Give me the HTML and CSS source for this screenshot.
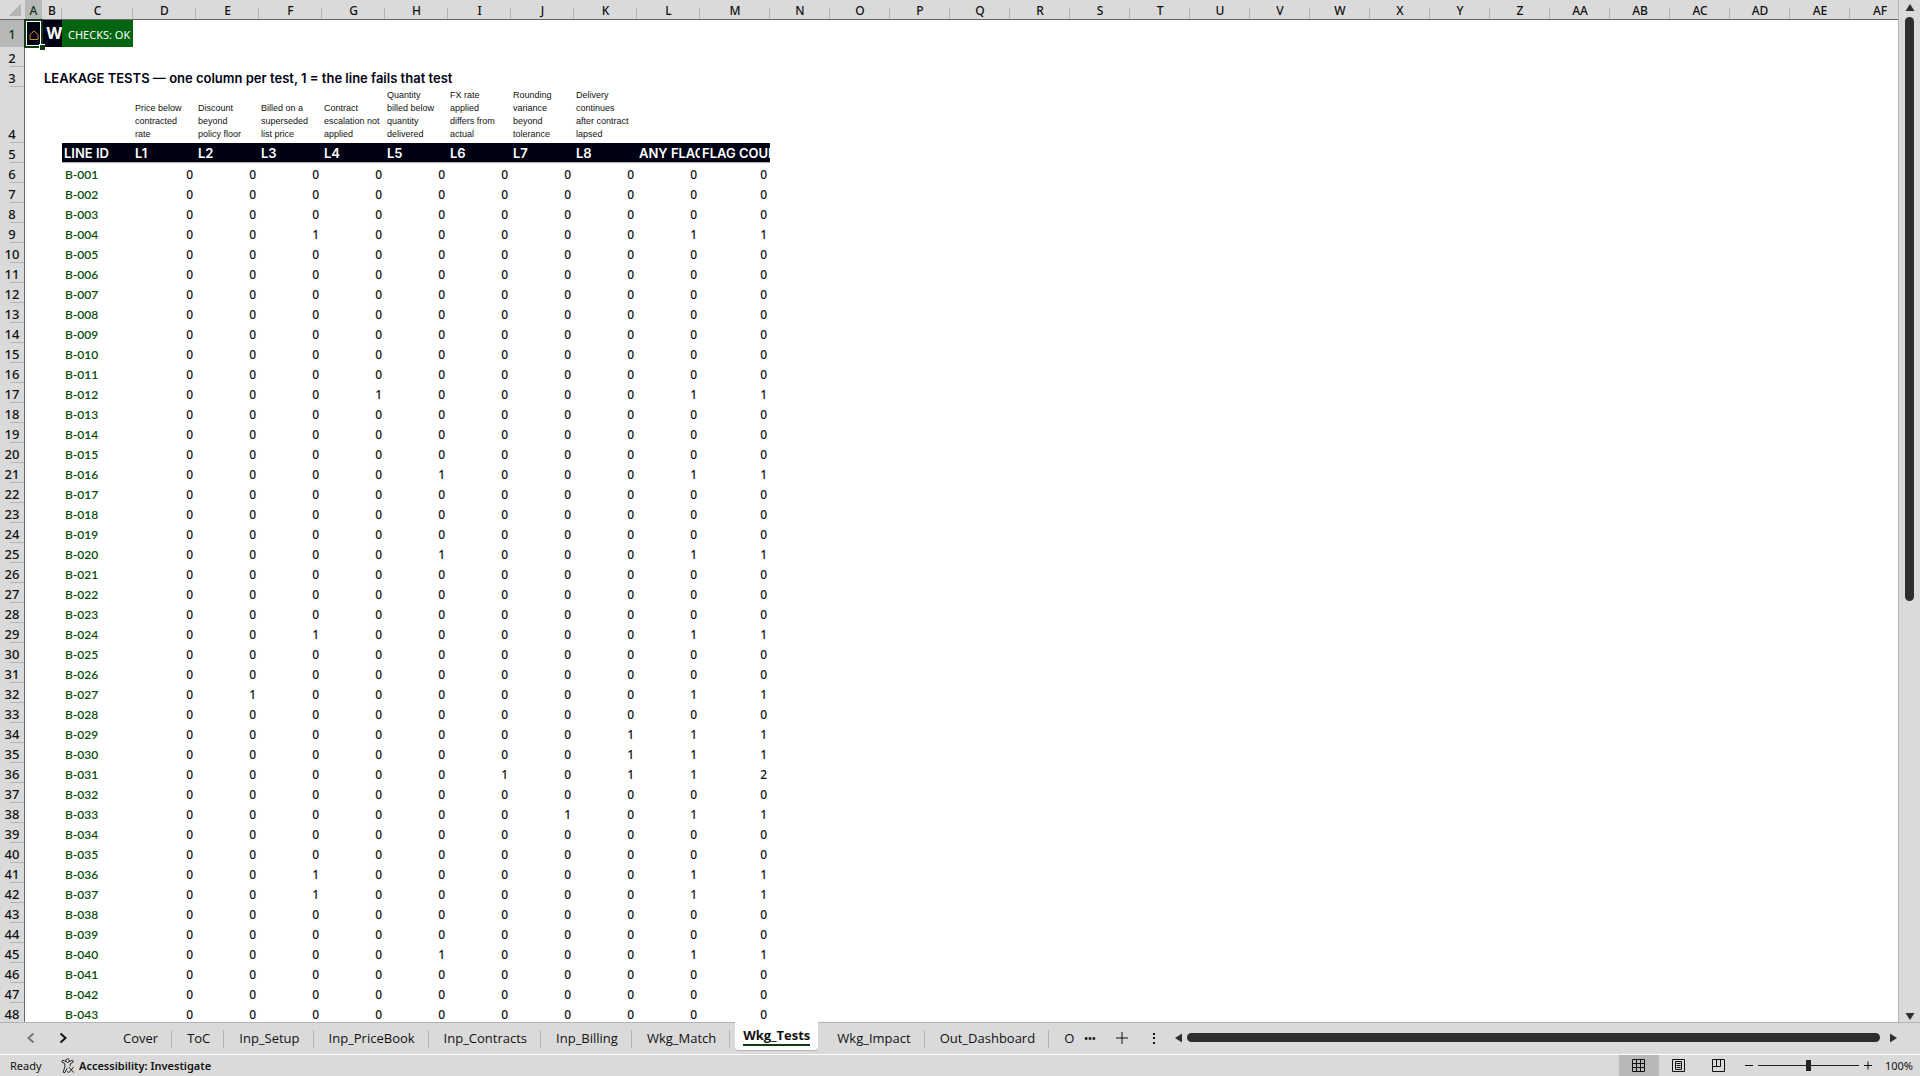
FILE: index.html
```html
<!DOCTYPE html>
<html lang="en">
<head>
	<meta charset="utf-8">
	<title>Wkg_Tests</title>
	<link rel="stylesheet" href="styles.css">
</head>
<body>
	<div class="app">
		<main class="workspace">
			<div class="sheet">
				<table class="grid">
					<colgroup>
						<col class="col-head"><col class="col-a"><col class="col-b"><col class="col-c">
						<col class="col-test" span="9"><col class="col-m"><col class="col-std" span="19">
					</colgroup>
					<thead>
						<tr id="letters"></tr>
					</thead>
					<tbody id="rows">
						<tr class="row-title">
							<th class="active" scope="row">1</th>
							<td class="home selected">
								<svg class="home-icon" viewBox="0 0 10 10"><path d="M1 9.500V4.500L5 1l4 3.500v5z"/></svg>
								<span class="handle"></span>
							</td>
							<td class="name">W</td>
							<td class="checks">CHECKS: OK</td>
						</tr>
						<tr><th scope="row">2</th></tr>
						<tr><th scope="row">3</th><td></td><td class="heading">LEAKAGE TESTS — one column per test, 1 = the line fails that test</td></tr>
						<tr class="row-notes">
							<th scope="row">4</th><td></td><td></td><td></td>
							<td>Price below<br>contracted<br>rate</td>
							<td>Discount<br>beyond<br>policy floor</td>
							<td>Billed on a<br>superseded<br>list price</td>
							<td>Contract<br>escalation not<br>applied</td>
							<td>Quantity<br>billed below<br>quantity<br>delivered</td>
							<td>FX rate<br>applied<br>differs from<br>actual</td>
							<td>Rounding<br>variance<br>beyond<br>tolerance</td>
							<td>Delivery<br>continues<br>after contract<br>lapsed</td>
						</tr>
						<tr class="row-fields">
							<th scope="row">5</th><td></td><td></td>
							<td class="field">LINE ID</td><td class="field">L1</td><td class="field">L2</td>
							<td class="field">L3</td><td class="field">L4</td><td class="field">L5</td>
							<td class="field">L6</td><td class="field">L7</td><td class="field">L8</td>
							<td class="field">ANY FLAG</td><td class="field">FLAG COUNT</td>
						</tr>
					</tbody>
				</table>
			</div>
			<div class="vscroll">
				<button class="arrow" aria-label="Scroll up"><svg viewBox="0 0 10 8"><path d="M5 0l4.500 7h-9z"/></svg></button>
				<div class="vtrack"><div class="vthumb"></div></div>
				<button class="arrow" aria-label="Scroll down"><svg viewBox="0 0 10 8"><path d="M5 8L.5 1h9z"/></svg></button>
			</div>
		</main>

		<nav class="tabbar">
			<div class="tabnav">
				<button aria-label="Previous sheet"><svg class="dim" viewBox="0 0 10 12"><path d="M7.500 1.500L2.500 6l5 4.500"/></svg></button>
				<button aria-label="Next sheet"><svg viewBox="0 0 10 12"><path d="M2.500 1.500L7.500 6l-5 4.500"/></svg></button>
			</div>
			<div class="tabs">
				<button class="tab">Cover</button>
				<button class="tab">ToC</button>
				<button class="tab">Inp_Setup</button>
				<button class="tab">Inp_PriceBook</button>
				<button class="tab">Inp_Contracts</button>
				<button class="tab">Inp_Billing</button>
				<button class="tab">Wkg_Match</button>
				<button class="tab current"><span>Wkg_Tests</span></button>
				<button class="tab">Wkg_Impact</button>
				<button class="tab">Out_Dashboard</button>
				<button class="tab last">O</button>
			</div>
			<div class="tabtools">
				<button aria-label="More sheets"><svg class="dots" viewBox="0 0 12 14"><path d="M0 6h3v3H0zM4.500 6h3v3h-3zM9 6h3v3H9z"/></svg></button>
				<button aria-label="New sheet"><svg viewBox="0 0 12 12"><path d="M6 0v12M0 6h12"/></svg></button>
				<button aria-label="Resize tabs"><svg class="dots" viewBox="0 0 12 12"><path d="M5 1h2v2H5zM5 5h2v2H5zM5 10h2v2H5z"/></svg></button>
			</div>
			<div class="hscroll">
				<button class="arrow" aria-label="Scroll left"><svg viewBox="0 0 8 10"><path d="M0 5L7 .5v9z"/></svg></button>
				<div class="hthumb"></div>
				<button class="arrow" aria-label="Scroll right"><svg viewBox="0 0 8 10"><path d="M8 5L1 .5v9z"/></svg></button>
			</div>
		</nav>

		<footer class="status">
			<span class="ready">Ready</span>
			<button class="access">
				<svg viewBox="0 0 16 18"><circle cx="7.500" cy="3" r="2"/><path d="M5.500 4L2 2.500 1 4.500 4.500 6.500v3.500L2.500 16l2 .5L7 11.500M9.500 4L13 2.500l1 2-3.500 2V9M7 15l2 1.500M9 10l5.500 6.500M14.500 10L9 16.500"/></svg>
				Accessibility: Investigate
			</button>
			<div class="views">
				<button class="view on" aria-label="Normal"><svg viewBox="0 0 15 15"><path d="M1.500 1.500h12v12h-12zM1.500 5.500h12M1.500 9.500h12M5.500 1.500v12M9.500 1.500v12"/></svg></button>
				<button class="view" aria-label="Page Layout"><svg viewBox="0 0 15 15"><path d="M1.500 1.500h12v12h-12zM4.500 3.500h6v8h-6zM5.500 5.500h4M5.500 7.500h4M5.500 9.500h4"/></svg></button>
				<button class="view" aria-label="Page Break Preview"><svg viewBox="0 0 15 15"><path d="M1.500 1.500h12v12h-12zM1.500 8.500h8v-7M5.500 1.500v7"/></svg></button>
			</div>
			<div class="zoom">
				<button aria-label="Zoom out"><svg viewBox="0 0 10 10"><path d="M1 4.500h8"/></svg></button>
				<input type="range" min="0" max="100" value="50" aria-label="Zoom">
				<button aria-label="Zoom in"><svg viewBox="0 0 10 10"><path d="M1 4.500h8M5 .5v8"/></svg></button>
				<span class="percent">100%</span>
			</div>
		</footer>
	</div>
	<script src="sheet.js"></script>
</body>
</html>
```
FILE: styles.css
```css
* {
	box-sizing: border-box;
}

body {
	margin: 0;
	background: #dadada;
	color: #111;
	font-family: "Noto Sans", "Open Sans", sans-serif;
	font-size: 12px;
}

button {
	padding: 0;
	border: 0;
	background: none;
	color: inherit;
	font: inherit;
}

svg {
	display: block;
	fill: none;
	stroke: #111;
}

.app {
	display: flex;
	flex-direction: column;
	height: 100vh;
	overflow: hidden;
}

.workspace {
	display: flex;
	flex: 1;
	min-height: 0;
}

/* grid */
.sheet {
	flex: 1;
	min-width: 0;
	overflow: hidden;
	background: #fff;
	border-right: 1px solid #b5b5b5;
}

.grid {
	table-layout: fixed;
	width: 1910px;
	border-collapse: separate;
	border-spacing: 0;
}

.col-head { width: 25px; }
.col-a { width: 17px; }
.col-b { width: 20px; }
.col-c { width: 71px; }
.col-test { width: 63px; }
.col-m { width: 70px; }
.col-std { width: 60px; }

.grid tr {
	height: 20px;
}

.grid th,
.grid td {
	padding: 3px 0 0;
	line-height: 17px;
	white-space: nowrap;
}

.grid thead th {
	height: 20px;
	padding: 2px 0 0;
	background: linear-gradient(#b5b5b5, #b5b5b5) right bottom / 1px 11px no-repeat #dadada;
	border-bottom: 1px solid #666;
	font-weight: 500;
}

.grid thead th.active {
	background-color: #b8b8b8;
	color: #0c3b14;
}

.grid thead th.corner {
	background: linear-gradient(135deg, transparent 50%, #b5b5b5 50%) 9px 4px / 12px 12px no-repeat #dadada;
}

.grid tbody th {
	padding-top: 2px;
	background: linear-gradient(#b5b5b5, #b5b5b5) right bottom / 14px 1px no-repeat #dadada;
	border-right: 1px solid #666;
	font-size: 13px;
	font-weight: 500;
	vertical-align: bottom;
}

.grid tbody th.active {
	background-color: #b8b8b8;
	color: #0c3b14;
}

.grid .row-title {
	height: 27px;
}

.grid .row-title th {
	vertical-align: middle;
}

.home,
.name {
	background: #000214;
	color: #fff;
}

.selected {
	position: relative;
	outline: 2px solid #0c3b14;
	outline-offset: -1px;
	box-shadow: inset 0 0 0 2px #fff;
}

.home-icon {
	width: 10px;
	height: 10px;
	margin: 0 auto;
	stroke: #e07b1a;
}

.handle {
	position: absolute;
	right: -3px;
	bottom: -3px;
	width: 6px;
	height: 6px;
	background: #0c3b14;
	border: solid #fff;
	border-width: 1px 0 0 1px;
}

.grid .name {
	padding: 0 0 0 4px;
	overflow: hidden;
	font-family: Inter, sans-serif;
	font-size: 16px;
	font-weight: 700;
}

.grid .checks {
	padding: 2px 0 0 6px;
	background: #03650f;
	color: #fff;
	font-size: 11px;
}

.grid .heading {
	padding-left: 2px;
	color: #000214;
	font-family: Inter, sans-serif;
	font-size: 13px;
	font-weight: 600;
}

.grid .row-notes {
	height: 56px;
}

.grid .row-notes td {
	padding: 0 0 2px 2px;
	font-family: "Liberation Sans", Arial, sans-serif;
	font-size: 9px;
	line-height: 13px;
	vertical-align: bottom;
}

.grid .field {
	padding: 2px 0 0 2px;
	overflow: hidden;
	background: #000214;
	border-bottom: 1px solid #b0b0b8;
	color: #fff;
	font-family: Inter, sans-serif;
	font-size: 13px;
	font-weight: 600;
}

.grid .line-id {
	padding-left: 3px;
	color: #064d0c;
	font-family: Lato, sans-serif;
	font-size: 12px;
	font-weight: 600;
}

.grid .flag {
	padding-right: 3px;
	font-size: 12px;
	font-weight: 500;
	text-align: right;
}

/* scroll bars */
.arrow svg {
	fill: #2e2e2e;
	stroke: none;
}

.vscroll {
	display: flex;
	flex-direction: column;
	align-items: center;
	width: 21px;
	padding: 4px 0 2px;
}

.vscroll svg {
	width: 10px;
	height: 8px;
}

.vtrack {
	flex: 1;
	padding: 5px 0;
}

.vthumb {
	width: 9px;
	height: 59%;
	background: #2e2e2e;
	border-radius: 5px;
}

.hscroll {
	display: flex;
	flex: 1;
	align-items: center;
	gap: 4px;
	padding: 0 23px 2px 0;
}

.hscroll svg {
	width: 8px;
	height: 10px;
}

.hthumb {
	flex: 1;
	height: 9px;
	margin-right: 5px;
	background: #2e2e2e;
	border-radius: 5px;
}

/* sheet tabs */
.tabbar {
	display: flex;
	height: 32px;
	border-top: 1px solid #b5b5b5;
	font-size: 13px;
}

.tabnav {
	display: flex;
	align-items: center;
	gap: 22px;
	width: 109px;
	padding: 0 0 2px 26px;
}

.tabnav svg {
	width: 10px;
	height: 12px;
	stroke-width: 2;
}

.tabnav .dim {
	stroke: #777;
}

.tabs {
	display: flex;
	align-items: flex-start;
	gap: 1px;
}

.tab {
	height: 30px;
	padding: 0 14px;
	background: linear-gradient(#b5b5b5, #b5b5b5) right 7px / 1px 18px no-repeat;
	font-family: "Open Sans", "Noto Sans", sans-serif;
}

.tab.last {
	padding-right: 10px;
	background: none;
}

.tab.current {
	height: 29px;
	margin: -1px 4px 0;
	padding: 0 8px;
	background: #fff;
	border-bottom: 1px solid #b5b5b5;
	border-radius: 0 0 4px 4px;
	font-weight: 700;
}

.tab.current span {
	display: block;
	border-bottom: 2px solid #0c3b14;
}

.tabtools {
	display: flex;
	align-items: center;
	gap: 20px;
	padding: 0 15px 2px 0;
}

.tabtools svg {
	width: 12px;
	height: 12px;
}

.tabtools .dots {
	fill: #111;
	stroke: none;
}

/* status bar */
.status {
	display: flex;
	align-items: center;
	height: 22px;
	border-top: 1px solid #fff;
	font-size: 11px;
}

.ready {
	width: 60px;
	padding-left: 10px;
}

.access {
	display: flex;
	align-items: center;
	gap: 3px;
	font-weight: 600;
}

.access svg {
	width: 16px;
	height: 16px;
}

.views {
	display: flex;
	align-self: stretch;
	margin-left: auto;
}

.view {
	width: 40px;
	padding-left: 12px;
}

.view.on {
	background: #b8b8b8;
}

.view svg {
	width: 15px;
	height: 15px;
}

.zoom {
	display: flex;
	align-items: center;
	gap: 4px;
	padding: 0 7px 0 5px;
}

.zoom svg {
	width: 10px;
	height: 10px;
}

.zoom input {
	width: 101px;
	height: 15px;
	margin: 0;
	appearance: none;
	background: linear-gradient(#222, #222) center / 100% 1px no-repeat;
}

.zoom input::-webkit-slider-thumb {
	appearance: none;
	width: 5px;
	height: 11px;
	background: #222;
}

.percent {
	padding-left: 8px;
}
```
FILE: sheet.js
```js
var letters = ["", "A", "B", "C", "D", "E", "F", "G", "H", "I", "J", "K", "L", "M", "N", "O", "P",
	"Q", "R", "S", "T", "U", "V", "W", "X", "Y", "Z", "AA", "AB", "AC", "AD", "AE", "AF"];

// line number -> tests that fail
var fails = {
	4: [3], 12: [4], 16: [5], 20: [5], 24: [3], 27: [2], 29: [8], 30: [8],
	31: [6, 8], 33: [7], 36: [3], 37: [3], 40: [5]
};

var head = document.getElementById("letters");
letters.forEach(function (letter, i) {
	var th = document.createElement("th");
	th.textContent = letter;
	if (i === 0) th.className = "corner";
	if (letter === "A") th.className = "active";
	head.appendChild(th);
});

function addCell(row, text, className) {
	var td = row.insertCell();
	td.textContent = text;
	td.className = className;
}

var body = document.getElementById("rows");
for (var n = 1; n <= 43; n++) {
	var hit = fails[n] || [];
	var row = body.insertRow();
	var th = document.createElement("th");
	th.scope = "row";
	th.textContent = n + 5;
	row.appendChild(th);
	addCell(row, "", "");
	addCell(row, "", "");
	addCell(row, "B-" + String(n).padStart(3, "0"), "line-id");
	for (var t = 1; t <= 8; t++) {
		addCell(row, hit.indexOf(t) >= 0 ? 1 : 0, "flag");
	}
	addCell(row, hit.length ? 1 : 0, "flag");
	addCell(row, hit.length, "flag");
}
```
